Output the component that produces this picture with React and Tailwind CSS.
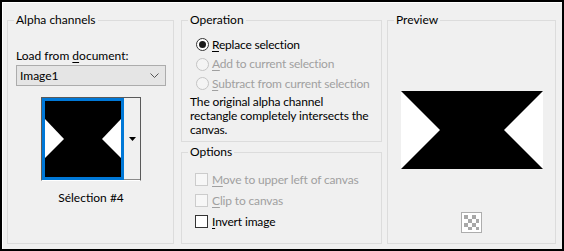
import React from "react";

const U = ({ children }) => <span className="underline underline-offset-[2px]">{children}</span>;

function Radio({ checked, disabled, children }) {
  return (
    <div className="flex items-center h-[19.5px]">
      <span
        className={
          "w-[13px] h-[13px] rounded-full border flex items-center justify-center shrink-0 " +
          (disabled ? "border-[#c4c4c4] bg-[#f4f4f4]" : "border-[#333333] bg-white")
        }
      >
        {checked && <span className="w-[7px] h-[7px] rounded-full bg-[#1a1a1a]" />}
      </span>
      <span className={"ml-[3px] whitespace-nowrap tracking-[-0.2px] " + (disabled ? "text-[#a0a0a0]" : "text-black")}>{children}</span>
    </div>
  );
}

function Check({ disabled, children }) {
  return (
    <div className="flex items-center h-[21px]">
      <span
        className={
          "w-[13px] h-[13px] border shrink-0 " +
          (disabled ? "border-[#cccccc] bg-[#f7f7f7]" : "border-[#333333] bg-white")
        }
      />
      <span className={"ml-[4px] whitespace-nowrap tracking-[-0.15px] " + (disabled ? "text-[#a0a0a0]" : "text-black")}>{children}</span>
    </div>
  );
}

function Group({ title, className, children }) {
  return (
    <fieldset className={"border border-[#dcdcdc] min-w-0 " + className}>
      <legend className="ml-[6px] px-[2px] leading-[16px]">{title}</legend>
      {children}
    </fieldset>
  );
}

export default function App() {
  return (
    <div
      className="w-[564px] h-[251px] border-2 border-black bg-[#f0f0f0] shadow-[inset_1px_1px_0_#ffffff] flex pt-[10px] pl-[5px] text-[12px] text-black"
      style={{ fontFamily: 'Lato, "Noto Sans", sans-serif' }}
    >
      {/* Alpha channels */}
      <Group title="Alpha channels" className="w-[167px] h-[232px]">
        <div className="pl-[8px] pt-[20px] w-[158px]">
          <div className="leading-[16px]">
            Load from <U>d</U>ocument:
          </div>
          <div className="mt-[1px] w-[150px] h-[21px] bg-[#e5e5e5] border border-[#acacac] flex items-center justify-between pl-[3px] pr-[6px]">
            <span className="leading-[16px]">Image1</span>
            <svg width="9" height="5" viewBox="0 0 9 5">
              <path d="M0.5 0.5 L4.5 4.5 L8.5 0.5" fill="none" stroke="#555" strokeWidth="1" />
            </svg>
          </div>
          <div className="w-[150px] flex justify-center mt-[11px]">
            <div className="flex border-t border-l border-r border-t-[#5a5a5a] border-l-[#5a5a5a] border-r-[#5a5a5a] border-b border-b-white">
              <div className="border-[3px] border-[#0078d7] bg-black">
                <svg width="76" height="76" viewBox="0 0 76 76" className="block">
                  <rect width="76" height="76" fill="#000" />
                  <polygon points="0,18 19,38 0,57" fill="#fff" />
                  <polygon points="76,18 57,38 76,57" fill="#fff" />
                </svg>
              </div>
              <div className="w-[16px] border-b border-b-[#8a8a8a] bg-[#f0f0f0] flex items-center justify-center">
                <svg width="7" height="4" viewBox="0 0 7 4">
                  <polygon points="0,0 7,0 3.5,4" fill="#000" />
                </svg>
              </div>
            </div>
          </div>
          <div className="w-[150px] text-center leading-[16px] mt-[9px]">Sélection #4</div>
        </div>
      </Group>

      {/* Middle column */}
      <div className="ml-[7px] w-[201px] flex flex-col">
        <Group title="Operation" className="h-[130px]">
          <div className="pl-[14px] pt-[7px]">
            <Radio checked>
              <U>R</U>eplace selection
            </Radio>
            <Radio disabled>
              <U>A</U>dd to current selection
            </Radio>
            <Radio disabled>
              <U>S</U>ubtract from current selection
            </Radio>
          </div>
          <div className="pl-[8px] pt-[1px] leading-[14px] whitespace-nowrap tracking-[-0.15px]">
            The original alpha channel
            <br />
            rectangle completely intersects the
            <br />
            canvas.
          </div>
        </Group>
        <Group title="Options" className="mt-[2px] h-[100px]">
          <div className="pl-[13px] pt-[9px]">
            <Check disabled>
              <U>M</U>ove to upper left of canvas
            </Check>
            <Check disabled>
              <U>C</U>lip to canvas
            </Check>
            <Check>
              <U>I</U>nvert image
            </Check>
          </div>
        </Group>
      </div>

      {/* Preview */}
      <Group title="Preview" className="ml-[5px] w-[169px] h-[232px]">
        <div className="flex flex-col items-center pt-[63px]">
          <svg width="142" height="78" viewBox="0 0 142 78" className="block">
            <rect width="142" height="78" fill="#fff" />
            <polygon points="0,0 142,0 103,39 142,78 0,78 39,39" fill="#000" />
          </svg>
          <div className="mt-[43px] w-[21px] h-[21px] border border-[#adadad] bg-white p-[2px]">
            <svg width="15" height="15" viewBox="0 0 15 15" className="block">
              <rect width="15" height="15" fill="#fff" />
              <rect x="0" y="0" width="4" height="4" fill="#a8a8a8" />
              <rect x="8" y="0" width="4" height="4" fill="#a8a8a8" />
              <rect x="4" y="4" width="4" height="4" fill="#a8a8a8" />
              <rect x="12" y="4" width="3" height="4" fill="#a8a8a8" />
              <rect x="0" y="8" width="4" height="4" fill="#a8a8a8" />
              <rect x="8" y="8" width="4" height="4" fill="#a8a8a8" />
              <rect x="4" y="12" width="4" height="3" fill="#a8a8a8" />
              <rect x="12" y="12" width="3" height="3" fill="#a8a8a8" />
            </svg>
          </div>
        </div>
      </Group>
    </div>
  );
}
